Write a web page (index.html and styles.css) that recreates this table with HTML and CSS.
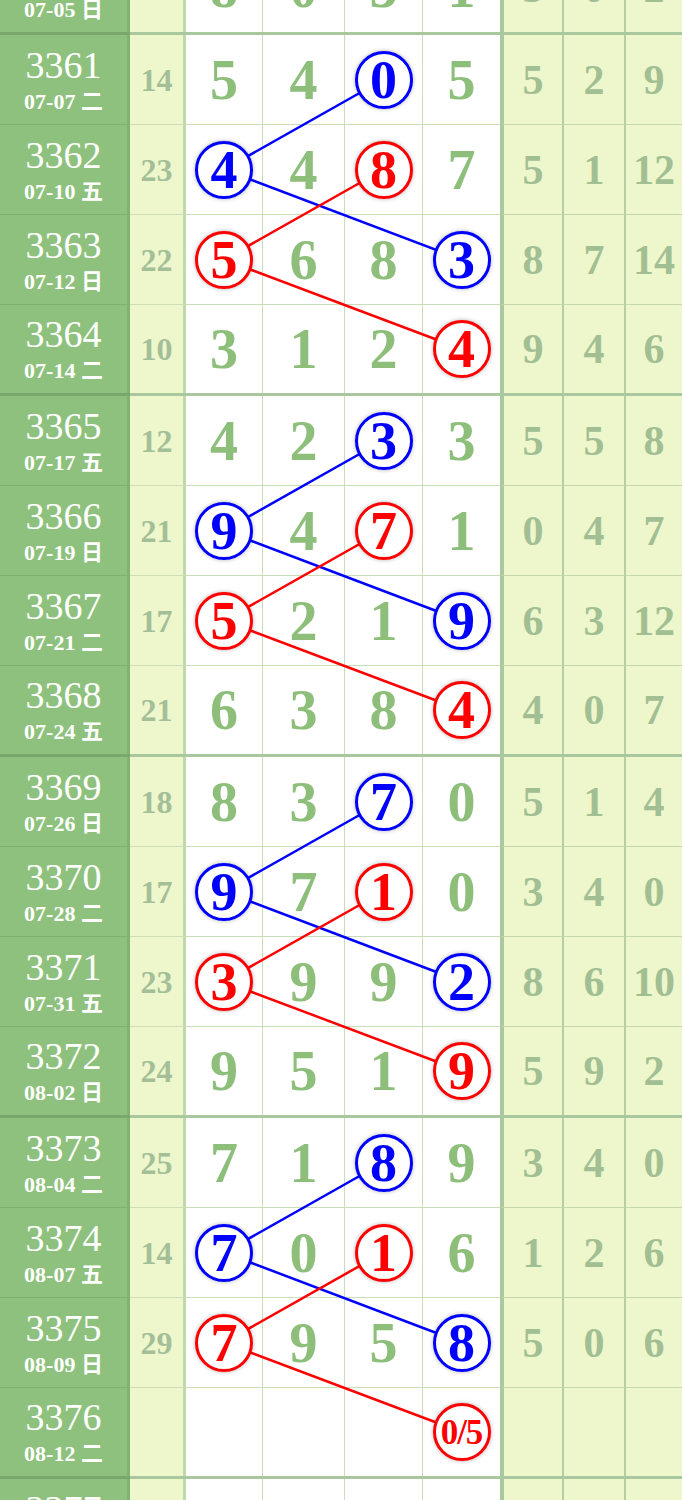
FILE: index.html
```html
<html>

<head>
    <title>
        走势图
    </title>
    <link rel="stylesheet" href="styles.css">
    <script>
        // issue, date, sum, 4 main digits (b = blue ball, r = red ball), 3 side numbers
        var rows = [
            ['3360', '07-05 日', '', ['8', '0', '3', '1'], ['3', '0', '2']],
            ['3361', '07-07 二', '14', ['5', '4', 'b0', '5'], ['5', '2', '9']],
            ['3362', '07-10 五', '23', ['b4', '4', 'r8', '7'], ['5', '1', '12']],
            ['3363', '07-12 日', '22', ['r5', '6', '8', 'b3'], ['8', '7', '14']],
            ['3364', '07-14 二', '10', ['3', '1', '2', 'r4'], ['9', '4', '6']],
            ['3365', '07-17 五', '12', ['4', '2', 'b3', '3'], ['5', '5', '8']],
            ['3366', '07-19 日', '21', ['b9', '4', 'r7', '1'], ['0', '4', '7']],
            ['3367', '07-21 二', '17', ['r5', '2', '1', 'b9'], ['6', '3', '12']],
            ['3368', '07-24 五', '21', ['6', '3', '8', 'r4'], ['4', '0', '7']],
            ['3369', '07-26 日', '18', ['8', '3', 'b7', '0'], ['5', '1', '4']],
            ['3370', '07-28 二', '17', ['b9', '7', 'r1', '0'], ['3', '4', '0']],
            ['3371', '07-31 五', '23', ['r3', '9', '9', 'b2'], ['8', '6', '10']],
            ['3372', '08-02 日', '24', ['9', '5', '1', 'r9'], ['5', '9', '2']],
            ['3373', '08-04 二', '25', ['7', '1', 'b8', '9'], ['3', '4', '0']],
            ['3374', '08-07 五', '14', ['b7', '0', 'r1', '6'], ['1', '2', '6']],
            ['3375', '08-09 日', '29', ['r7', '9', '5', 'b8'], ['5', '0', '6']],
            ['3376', '08-12 二', '', ['', '', '', 'r0/5'], ['', '', '']],
            ['3377', '08-14 五', '', ['', '', '', ''], ['', '', '']]
        ];

        function makeCell(cls, text) {
            let el = document.createElement('div');
            el.className = 'cell ' + cls;
            if (text) {
                el.innerText = text;
            }
            return el;
        }

        function makeRow(r, last) {
            let rowEl = document.createElement('div');
            rowEl.className = last ? 'row end' : 'row';

            let head = makeCell('head');
            let no = document.createElement('div');
            no.className = 'issue';
            no.innerText = r[0];
            let dt = document.createElement('div');
            dt.className = 'date';
            dt.innerText = r[1];
            head.appendChild(no);
            head.appendChild(dt);
            rowEl.appendChild(head);

            rowEl.appendChild(makeCell('sum', r[2]));

            for (let i = 0; i < r[3].length; i++) {
                let v = r[3][i];
                let td = makeCell(i == 0 ? 'num first' : 'num');
                if (v[0] == 'b' || v[0] == 'r') {
                    let ball = document.createElement('span');
                    ball.className = 'ball ' + (v[0] == 'b' ? 'blue' : 'red');
                    if (v.length > 2) {
                        ball.className += ' small';
                    }
                    ball.innerText = v.slice(1);
                    td.appendChild(ball);
                } else {
                    td.innerText = v;
                }
                rowEl.appendChild(td);
            }

            for (let i = 0; i < r[4].length; i++) {
                rowEl.appendChild(makeCell(i == 0 ? 'side first' : 'side', r[4][i]));
            }
            return rowEl;
        }

        function buildChart() {
            document.querySelector('.top-part').appendChild(makeRow(rows[0], true));
            let groups = document.querySelectorAll('.group');
            for (let g = 0; g < groups.length; g++) {
                for (let k = 0; k < 4; k++) {
                    groups[g].appendChild(makeRow(rows[1 + g * 4 + k], k == 3));
                }
            }
            document.querySelector('.tail').appendChild(makeRow(rows[17], false));
        }

        function center(el, box) {
            let b = el.getBoundingClientRect();
            return [b.left + b.width / 2 - box.left, b.top + b.height / 2 - box.top];
        }

        function drawLines() {
            let svg = document.querySelector('.links');
            let box = document.querySelector('.chart').getBoundingClientRect();
            svg.setAttribute('width', box.width);
            svg.setAttribute('height', box.height);
            let groups = document.querySelectorAll('.group');
            let colors = { blue: '#0000ff', red: '#ff0000' };
            for (let g = 0; g < groups.length; g++) {
                for (let c in colors) {
                    let balls = groups[g].querySelectorAll('.ball.' + c);
                    for (let i = 1; i < balls.length; i++) {
                        let a = center(balls[i - 1], box);
                        let b = center(balls[i], box);
                        let ln = document.createElementNS('http://www.w3.org/2000/svg', 'line');
                        ln.setAttribute('x1', a[0]);
                        ln.setAttribute('y1', a[1]);
                        ln.setAttribute('x2', b[0]);
                        ln.setAttribute('y2', b[1]);
                        ln.setAttribute('stroke', colors[c]);
                        ln.setAttribute('stroke-width', '2.5');
                        svg.appendChild(ln);
                    }
                }
            }
        }
    </script>
</head>

<body onload="buildChart();drawLines()">
    <div class="chart">
        <svg class="links"></svg>
        <div class="top-part"></div>
        <div class="sep"></div>
        <div class="group"></div>
        <div class="sep"></div>
        <div class="group"></div>
        <div class="sep"></div>
        <div class="group"></div>
        <div class="sep"></div>
        <div class="group"></div>
        <div class="sep"></div>
        <div class="tail"></div>
    </div>
</body>

</html>
```

FILE: styles.css
```css
* {
    box-sizing: border-box;
}

body {
    margin: 0px;
    background-color: white;
    font-family: "Liberation Serif", "Noto Sans CJK SC", serif;
    overflow: hidden;
}

.chart {
    position: relative;
    width: 682px;
}

.links {
    position: absolute;
    top: 0;
    left: 0;
    z-index: 1;
    pointer-events: none;
}

.top-part {
    height: 32px;
    overflow: hidden;
    display: flex;
    flex-direction: column;
    justify-content: flex-end;
}

.top-part .row {
    flex: none;
}

.sep {
    height: 3px;
    background: linear-gradient(to right, #78a96a 130px, #a9c89d 130px);
}

.row {
    display: grid;
    grid-template-columns: 130px 53px 79px 82px 78px 78px 62px 62px 58px;
    height: 90px;
}

.row.end {
    height: 88px;
}

.cell {
    display: flex;
    align-items: center;
    justify-content: center;
    border-bottom: 1px solid #c9ddb9;
    font-weight: bold;
    line-height: 1;
}

.row.end .cell {
    border-bottom: none;
}

.head {
    flex-direction: column;
    background-color: #8ec17d;
    color: white;
    border-right: 3px solid #82b471;
    border-bottom-color: #80b06f;
}

.issue {
    font-size: 38px;
    font-weight: normal;
    line-height: 38px;
}

.date {
    font-size: 22px;
    line-height: 24px;
    margin-top: 6px;
}

.sum {
    background-color: #eef7cc;
    color: #a4bf97;
    font-size: 32px;
    border-bottom-color: #cfdfb3;
}

.num {
    background-color: white;
    color: #8dbf7b;
    font-size: 56px;
    border-left: 1px solid #c9ddb9;
}

.num.first {
    border-left: 3px solid #c0d9aa;
}

.side {
    background-color: #eef7cc;
    color: #a2bf94;
    font-size: 42px;
    border-left: 2px solid #b6cfa0;
    border-bottom-color: #c4d8a9;
}

.side.first {
    border-left: 4px solid #a9c99c;
}

.ball {
    position: relative;
    z-index: 2;
    width: 58px;
    height: 58px;
    border-radius: 50%;
    border: 3px solid;
    background-color: white;
    box-shadow: 0 0 4px rgba(0, 0, 0, 0.3);
    display: flex;
    align-items: center;
    justify-content: center;
    font-size: 54px;
    line-height: 1;
}

.ball.blue {
    color: #0000ff;
    border-color: #0000ff;
}

.ball.red {
    color: #ff0000;
    border-color: #ff0000;
}

.ball.small {
    font-size: 35px;
    letter-spacing: -1px;
}
```
